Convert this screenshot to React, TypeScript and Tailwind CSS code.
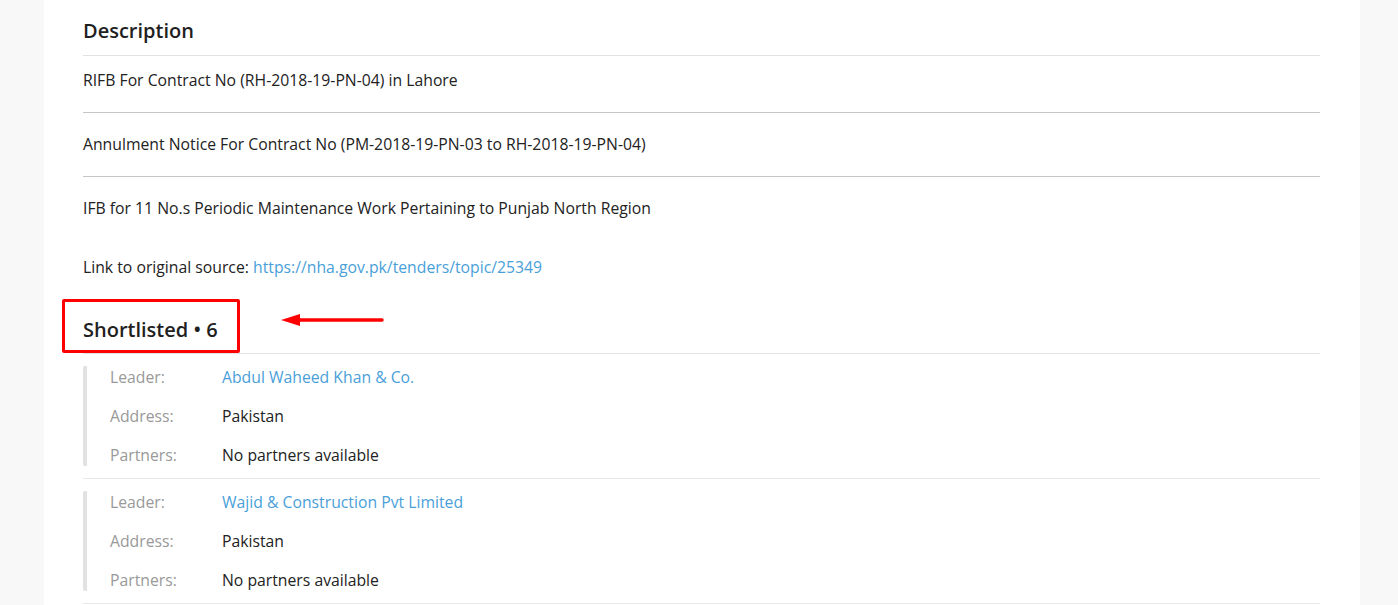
import React from 'react'

interface Firm { leader: string; address: string; partners: string }

const descriptions = [
  'RIFB For Contract No (RH-2018-19-PN-04) in Lahore',
  'Annulment Notice For Contract No (PM-2018-19-PN-03 to RH-2018-19-PN-04)',
  'IFB for 11 No.s Periodic Maintenance Work Pertaining to Punjab North Region',
]

const firms: Firm[] = [
  { leader: 'Abdul Waheed Khan & Co.', address: 'Pakistan', partners: 'No partners available' },
  { leader: 'Wajid & Construction Pvt Limited', address: 'Pakistan', partners: 'No partners available' },
  { leader: 'Hameed & Sons Builders', address: 'Pakistan', partners: 'No partners available' },
]

function FirmRow({ label, children }: { label: string; children: React.ReactNode }) {
  return (
    <div className="flex leading-[22px]">
      <span className="w-[112px] shrink-0 text-[#999999]">{label}</span>
      <span className="text-[#222222]">{children}</span>
    </div>
  )
}

export default function App() {
  return (
    <div className="h-[605px] overflow-hidden bg-[#f8f8f8]" style={{ fontFamily: '"Open Sans", "Liberation Sans", sans-serif' }}>
      <div className="ml-[44px] w-[1316px] min-h-[605px] bg-white pl-[39px] pr-[40px] pt-[18px] text-[15.75px] text-[#222222]">
        {/* Description */}
        <h2 className="text-[20px] font-semibold leading-[26px] pb-[11px] border-b border-[#e2e2e2] text-[#1f1f1f]">Description</h2>
        <div>
          {descriptions.map((d, i) => (
            <p key={i}
              className={`leading-[22px] ${i === 0 ? 'pt-[13px]' : 'pt-[20px]'} ${i < descriptions.length - 1 ? 'pb-[21px] border-b border-[#c6c6c6]' : ''}`}>
              {d}
            </p>
          ))}
        </div>
        <p className="mt-[37px] leading-[22px]">
          Link to original source:{' '}
          <a href="#" className="text-[#4a9fd9]">https://nha.gov.pk/tenders/topic/25349</a>
        </p>

        {/* Shortlisted */}
        <div className="relative mt-[39px]">
          <h2 className="text-[20px] font-semibold leading-[26px] pb-[10px] border-b border-[#e2e2e2] text-[#1f1f1f]">
            Shortlisted • 6
          </h2>
          <div className="absolute left-[-21px] top-[-18px] w-[178px] h-[54px] border-[3px] border-[#ff0000] rounded-[2px] pointer-events-none" />
          <svg className="absolute left-[198px] top-[-5px]" width="106" height="16" viewBox="0 0 106 16">
            <line x1="16" y1="8" x2="101" y2="8" stroke="#ff0000" strokeWidth="3.5" strokeLinecap="round" />
            <polygon points="0,8 19,2 19,14" fill="#ff0000" />
          </svg>
        </div>

        <div>
          {firms.map((f, i) => (
            <div key={i} className="py-[12px] border-b border-[#e8e8e8]">
              <div className="flex flex-col gap-[17px] border-l-4 border-[#e2e2e2] rounded-[2px] pl-[23px]">
                <FirmRow label="Leader:">
                  <a href="#" className="text-[#4a9fd9]">{f.leader}</a>
                </FirmRow>
                <FirmRow label="Address:">{f.address}</FirmRow>
                <FirmRow label="Partners:">{f.partners}</FirmRow>
              </div>
            </div>
          ))}
        </div>
      </div>
    </div>
  )
}
